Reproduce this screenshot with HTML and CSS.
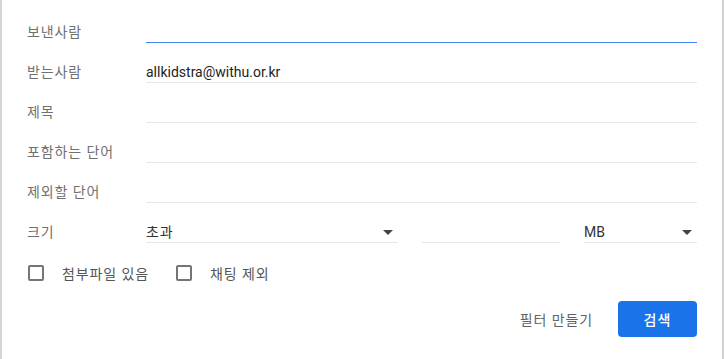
FILE: index.html
```html
<!DOCTYPE html>
<html lang="ko">
<head>
<meta charset="utf-8">
<title>검색 옵션</title>
<link rel="stylesheet" href="styles.css">
</head>
<body>
<div class="dialog">
  <form class="form">
    <div class="row">
      <label class="label">보낸사람</label>
      <div class="field focused"></div>
    </div>
    <div class="row">
      <label class="label">받는사람</label>
      <div class="field value">allkidstra@withu.or.kr</div>
    </div>
    <div class="row">
      <label class="label">제목</label>
      <div class="field"></div>
    </div>
    <div class="row">
      <label class="label">포함하는 단어</label>
      <div class="field"></div>
    </div>
    <div class="row">
      <label class="label">제외할 단어</label>
      <div class="field"></div>
    </div>
    <div class="row">
      <label class="label">크기</label>
      <div class="size">
        <div class="field select sel-op"><span class="ko">초과</span><span class="arrow"></span></div>
        <div class="field num"></div>
        <div class="field select sel-unit"><span>MB</span><span class="arrow"></span></div>
      </div>
    </div>
    <div class="checks">
      <div class="check"><span class="box"></span><span class="check-label">첨부파일 있음</span></div>
      <div class="check"><span class="box"></span><span class="check-label">채팅 제외</span></div>
    </div>
    <div class="actions">
      <span class="text-btn">필터 만들기</span>
      <span class="primary-btn">검색</span>
    </div>
  </form>
</div>
</body>
</html>
```

FILE: styles.css
```css
html, body {
  margin: 0;
  padding: 0;
  background: #ffffff;
}

body {
  font-family: Roboto, "Noto Sans CJK KR", "Noto Sans", sans-serif;
  font-size: 14px;
}

.dialog {
  width: 720px;
  height: 359px;
  border-left: 2px solid #d6d6d6;
  border-right: 2px solid #d0d0d0;
  background: #ffffff;
}

.form {
  padding: 3px 25px 0 25px;
}

.row {
  display: flex;
  align-items: flex-end;
  height: 40px;
}

.label {
  width: 119px;
  flex: none;
  line-height: 20px;
  padding-bottom: 1px;
  color: #707070;
  letter-spacing: 0.9px;
}

.field {
  flex: 1;
  height: 20px;
  line-height: 20px;
  border-bottom: 1px solid #e8e8e8;
  color: #222222;
}

.field.focused {
  border-bottom-color: #4285f4;
}

.ko {
  letter-spacing: 0.9px;
}

.size {
  flex: 1;
  display: flex;
  gap: 24px;
}

.select {
  display: flex;
  justify-content: space-between;
  align-items: center;
  color: #333333;
}

.sel-op {
  flex: 0 0 252px;
}

.num {
  flex: 0 0 138px;
}

.sel-unit {
  flex: 0 0 113px;
}

.arrow {
  width: 0;
  height: 0;
  margin-right: 5px;
  border-left: 5px solid transparent;
  border-right: 5px solid transparent;
  border-top: 5px solid #444444;
}

.checks {
  display: flex;
  align-items: center;
  gap: 27px;
  height: 20px;
  margin-top: 20px;
  padding-left: 1px;
}

.check {
  display: flex;
  align-items: center;
  gap: 18px;
}

.box {
  width: 12px;
  height: 12px;
  border: 2px solid #757575;
  border-radius: 2px;
}

.check-label {
  color: #555555;
  letter-spacing: 0.9px;
}

.actions {
  display: flex;
  justify-content: flex-end;
  align-items: center;
  margin-top: 18px;
}

.text-btn {
  color: #5f6368;
  margin-right: 25px;
  letter-spacing: 0.9px;
}

.primary-btn {
  width: 79px;
  height: 36px;
  border-radius: 4px;
  background: #1a73e8;
  color: #ffffff;
  display: flex;
  align-items: center;
  justify-content: center;
  font-weight: 500;
  letter-spacing: 1px;
}
```
